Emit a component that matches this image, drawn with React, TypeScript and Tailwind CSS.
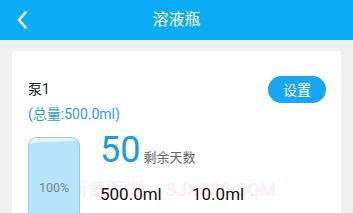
import React from "react";

const font = { fontFamily: 'Roboto, "Noto Sans CJK SC", sans-serif' };

export default function App() {
  return (
    <div className="relative w-[353px] h-[213px] overflow-hidden bg-[#f0f0f0]" style={font}>
      {/* 顶栏 */}
      <div className="relative h-10 bg-[#0aadf5] flex items-center justify-center">
        <svg className="absolute left-[17px] top-[11px]" width="10" height="18" viewBox="0 0 10 18">
          <path d="M8.5 1.5 L2 9 L8.5 16.5" fill="none" stroke="#fff" strokeWidth="2.6" strokeLinecap="round" strokeLinejoin="round" />
        </svg>
        <span className="text-white text-[16px] leading-none">溶液瓶</span>
      </div>

      {/* 卡片 */}
      <div className="relative mx-3 mt-[11px] bg-white rounded-[4px] px-4 pt-7 h-[200px]">
        {/* 水印 */}
        <div className="absolute left-[58px] top-[127px] flex items-center text-[18px] leading-6 text-[#fde9f8] pointer-events-none select-none">
          <span className="tracking-[1px]">新意互联</span>
          <span className="ml-5">SJXINYI.COM</span>
        </div>

        <div className="relative flex items-start justify-between">
          <div>
            <div className="text-[14px] leading-5 text-[#222]">泵1</div>
            <div className="mt-[5px] text-[14px] leading-5 text-[#2e9fd4]">(总量:500.0ml)</div>
          </div>
          <button className="mt-[-3px] mr-[-1px] w-[58px] h-[27px] rounded-full bg-[#17a6f1] text-white text-[14px] leading-none">
            设置
          </button>
        </div>

        <div className="relative mt-2 flex items-start">
          <div className="relative mt-[5px] w-[52px] h-[90px] rounded-t-[9px] border border-[#a3c6da] bg-[#b6e4fa] overflow-hidden">
            <svg className="absolute left-0 top-0" width="52" height="10" viewBox="0 0 52 10">
              <path d="M0 0 H52 V3 C40 1 30 5 18 4 C10 3.5 5 5 0 6 Z" fill="#e3f5fd" />
            </svg>
            <div className="relative pt-[42px] text-center text-[12.5px] leading-4 text-[#76878f]">100%</div>
          </div>

          <div className="ml-5">
            <div className="flex items-baseline h-9">
              <span className="text-[36px] leading-9 text-[#1e9bd8]">50</span>
              <span className="ml-[3px] text-[13px] text-[#666]">剩余天数</span>
            </div>
            <div className="mt-[14px] flex text-[17px] leading-6 text-[#111]">
              <span className="w-[92px]">500.0ml</span>
              <span>10.0ml</span>
            </div>
          </div>
        </div>
      </div>
    </div>
  );
}
